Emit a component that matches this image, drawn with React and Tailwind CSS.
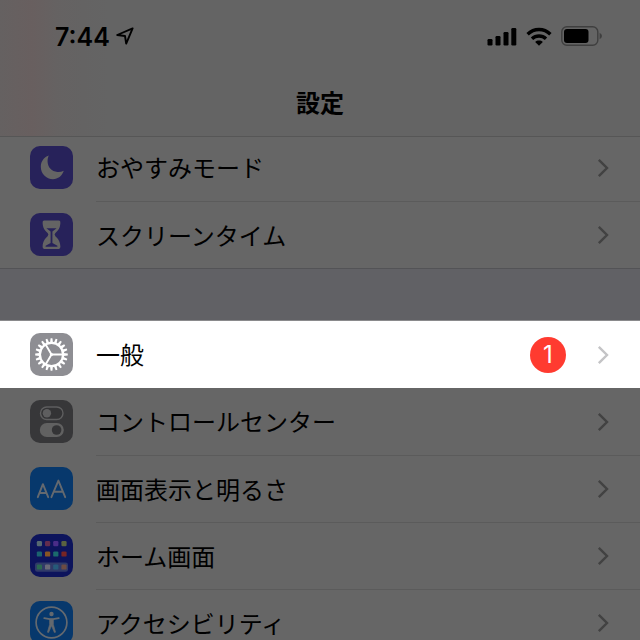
import React from "react";

function MoonIcon() {
    return (
        <svg viewBox="0 0 43 43" className="w-full h-full" aria-hidden="true">
            <path d="M18.8 9.6 C13.6 11.4 10.8 15.8 10.8 20.8 C10.8 27.8 16.2 33.2 23 33.2 C28 33.2 32 30 33.8 24.8 C31.6 25.8 29.6 26.2 27.4 26 C21.6 25.4 18 21.4 17.6 16 C17.5 13.6 17.9 11.6 18.8 9.6 Z" fill="#646464" />
        </svg>
    );
}

function HourglassIcon() {
    return (
        <svg viewBox="0 0 43 43" className="w-full h-full" aria-hidden="true">
            <path d="M14.2 7.5 H28.8 Q30.6 7.5 30.4 9.8 C30.2 15 28.2 17.6 25.4 20 Q23.8 21.5 25.4 23.2 C28.2 25.6 30.2 28.4 30.4 33.6 Q30.6 36 28.8 36 H14.2 Q12.4 36 12.6 33.6 C12.8 28.4 14.8 25.6 17.6 23.2 Q19.2 21.5 17.6 20 C14.8 17.6 12.8 15 12.6 9.8 Q12.4 7.5 14.2 7.5 Z" fill="#646464" />
            <path d="M16.4 15.2 H26.6 L22.4 18.6 V30 L27.4 32.8 V33.8 H15.6 V32.8 L20.6 30 V18.6 Z" fill="#27225a" />
        </svg>
    );
}

function GearIcon() {
    const teeth = Array.from({ length: 20 }, (_, i) => i * 18);
    return (
        <svg viewBox="0 0 43 43" className="w-full h-full" fill="none" stroke="#ffffff" aria-hidden="true">
            {teeth.map((angle) => (
                <path key={angle} d="M20.1 9.6 L20.6 5.2 H22.4 L22.9 9.6 Z" fill="#ffffff" stroke="none" transform={`rotate(${angle} 21.5 21.5)`} />
            ))}
            <circle cx="21.5" cy="21.5" r="11.6" strokeWidth="2.3" />
            <path d="M21.5 21.5 H33 M21.5 21.5 L15.6 11.4 M21.5 21.5 L15.6 31.6" strokeWidth="1.9" />
            <circle cx="21.5" cy="21.5" r="1.6" fill="#ffffff" stroke="none" />
        </svg>
    );
}

function TogglesIcon() {
    return (
        <svg viewBox="0 0 43 43" className="w-full h-full" aria-hidden="true">
            <rect x="10.5" y="7" width="22.5" height="12.5" rx="6.25" fill="#333335" stroke="#5e5e5f" strokeWidth="1.4" />
            <circle cx="16.9" cy="13.2" r="4.2" fill="#5e5e5f" />
            <rect x="9.8" y="23" width="24" height="14" rx="7" fill="#616161" />
            <circle cx="26.6" cy="30" r="4.8" fill="#343436" />
        </svg>
    );
}

function TextSizeIcon() {
    return (
        <svg viewBox="0 0 43 43" className="w-full h-full" fill="none" stroke="#64696f" strokeLinecap="round" strokeLinejoin="round" aria-hidden="true">
            <path d="M7.8 30.2 L12.9 17.2 L18.2 30.2 M9.6 26 H16.4" strokeWidth="1.9" />
            <path d="M21.4 30.2 L28.4 13.6 L35.2 30.2 M24 24.8 H32.8" strokeWidth="1.9" />
        </svg>
    );
}

function HomeGridIcon() {
    const dots = [
        ["#566870", "#632c4e", "#4a2c88", "#5a6241"],
        ["#1b626e", "#875523", "#1b6a6c", "#782524"],
        ["#2b6850", "#6a6a78", "#265a7a", "#6c4b43"],
    ];
    const rows = [7, 17.4, 30.4];
    return (
        <svg viewBox="0 0 43 43" className="w-full h-full" aria-hidden="true">
            <rect x="5" y="28.4" width="33" height="9.4" rx="2.4" fill="#303a68" />
            {dots.map((row, r) =>
                row.map((color, c) => (
                    <rect key={`${r}-${c}`} x={6.8 + c * 8.2} y={rows[r]} width="5.2" height="5.2" rx="1.2" fill={color} />
                ))
            )}
        </svg>
    );
}

function AccessibilityIcon() {
    return (
        <svg viewBox="0 0 43 43" className="w-full h-full" fill="none" stroke="#64696f" aria-hidden="true">
            <circle cx="21.5" cy="21.5" r="15.4" strokeWidth="1.7" />
            <circle cx="21.5" cy="13" r="2.2" fill="#64696f" stroke="none" />
            <path d="M14.2 17.2 L19.8 18.2 H23.2 L28.8 17.2" strokeWidth="1.7" strokeLinecap="round" />
            <path d="M19.6 18 H23.4 V23.6 L25.6 31.2 L24.4 31.6 L21.5 24.8 L18.6 31.6 L17.4 31.2 L19.6 23.6 Z" fill="#64696f" strokeWidth="0.6" strokeLinejoin="round" />
        </svg>
    );
}

function Chevron({ className }) {
    return (
        <svg viewBox="0 0 12 20" className={`w-3 h-5 shrink-0 ${className}`} fill="none" stroke="currentColor" strokeWidth="2.4" aria-hidden="true">
            <path d="M1.8 1.8 L10 10 L1.8 18.2" />
        </svg>
    );
}

const focusItems = [
    { label: "おやすみモード", icon: <MoonIcon />, tile: "bg-[#27225a]" },
    { label: "スクリーンタイム", icon: <HourglassIcon />, tile: "bg-[#27225a]" },
];

const generalItems = [
    { label: "一般", icon: <GearIcon />, tile: "bg-[#8e8e93]", badge: 1, active: true },
    { label: "コントロールセンター", icon: <TogglesIcon />, tile: "bg-[#373739]" },
    { label: "画面表示と明るさ", icon: <TextSizeIcon />, tile: "bg-[#07386c]" },
    { label: "ホーム画面", icon: <HomeGridIcon />, tile: "bg-[#0d145c]" },
    { label: "アクセシビリティ", icon: <AccessibilityIcon />, tile: "bg-[#07386c]" },
];

function SettingsRow({ item, divider }) {
    return (
        <li className={item.active ? "bg-white" : "bg-[#666666]"}>
            <a href="#" className="flex h-[67px] pl-[30px]">
                <span className="flex items-center shrink-0 w-[66px]">
                    <span className={`w-[43px] h-[43px] rounded-[10px] overflow-hidden ${item.tile}`}>{item.icon}</span>
                </span>
                <span className={`flex flex-1 items-center pr-[31px] ${divider ? "border-t border-[#5b5b5b]" : ""}`}>
                    <span className="flex-1 pt-[3px] text-2xl text-black">{item.label}</span>
                    {item.badge && (
                        <span className="flex items-center justify-center w-9 h-9 mr-[31px] rounded-full bg-[#ff3b30] text-2xl text-white">
                            {item.badge}
                        </span>
                    )}
                    <Chevron className={item.active ? "text-[#c4c4c6]" : "text-[#424242]"} />
                </span>
            </a>
        </li>
    );
}

function StatusBar() {
    return (
        <div className="flex items-center justify-between h-[72px] pl-[55px] pr-[38px]">
            <div className="flex items-center gap-1.5">
                <span className="pt-[3px] text-[25px] font-semibold">7:44</span>
                <svg viewBox="0 0 18 18" className="w-[18px] h-[18px]" fill="none" stroke="currentColor" strokeWidth="1.9" strokeLinejoin="round" aria-hidden="true">
                    <path d="M16.6 1.4 L1.2 8 L9 9 L10.2 16.6 Z" />
                </svg>
            </div>
            <div className="flex items-center gap-[9px]">
                <svg viewBox="0 0 30 19" className="w-[30px] h-[19px]" fill="currentColor" aria-hidden="true">
                    <rect x="0.5" y="12" width="5" height="6.5" rx="1.2" />
                    <rect x="8.5" y="9" width="5" height="9.5" rx="1.2" />
                    <rect x="16.5" y="5" width="5" height="13.5" rx="1.2" />
                    <rect x="24.3" y="1" width="5" height="17.5" rx="1.2" />
                </svg>
                <svg viewBox="0 0 26 19" className="w-[26px] h-[19px]" fill="none" stroke="currentColor" strokeWidth="3.4" aria-hidden="true">
                    <path d="M1.6 7.2 C8 0.9 18 0.9 24.4 7.2" />
                    <path d="M6 11.8 C10 8 16 8 20 11.8" />
                    <path d="M13 18.8 L9.2 15 C11.2 13.1 14.8 13.1 16.8 15 Z" fill="currentColor" stroke="none" />
                </svg>
                <svg viewBox="0 0 41 20" className="w-[41px] h-5" aria-hidden="true">
                    <rect x="0.8" y="0.8" width="36" height="18.4" rx="5" fill="none" stroke="#3f3f3f" strokeWidth="1.4" />
                    <rect x="3" y="3" width="24.5" height="14" rx="3" fill="currentColor" />
                    <path d="M38.6 6.8 Q41 8 41 10 Q41 12 38.6 13.2 Z" fill="#3f3f3f" />
                </svg>
            </div>
        </div>
    );
}

export default function App() {
    return (
        <div className="flex flex-col h-screen overflow-hidden bg-[#616165] text-black font-['Inter','Noto_Sans_CJK_JP',sans-serif]">
            <header className="relative z-10 shrink-0 border-b border-[#565656] bg-[#646464] bg-[linear-gradient(90deg,rgba(102,94,94,0.5)_0%,rgba(106,93,93,0.7)_5%,rgba(102,97,97,0.6)_9%,rgba(100,98,98,0.5)_13%,rgba(100,100,100,0)_17%)]">
                <StatusBar />
                <h1 className="h-16 text-2xl leading-[64px] font-bold text-center">設定</h1>
            </header>

            <main className="-mt-[3px]">
                <ul className="border-b border-[#535356]">
                    {focusItems.map((item, i) => (
                        <SettingsRow key={item.label} item={item} divider={i > 0} />
                    ))}
                </ul>
                <ul className="mt-[51px] border-t border-[#8a8a8c]">
                    {generalItems.map((item, i) => (
                        <SettingsRow key={item.label} item={item} divider={i > 1} />
                    ))}
                </ul>
            </main>
        </div>
    );
}
